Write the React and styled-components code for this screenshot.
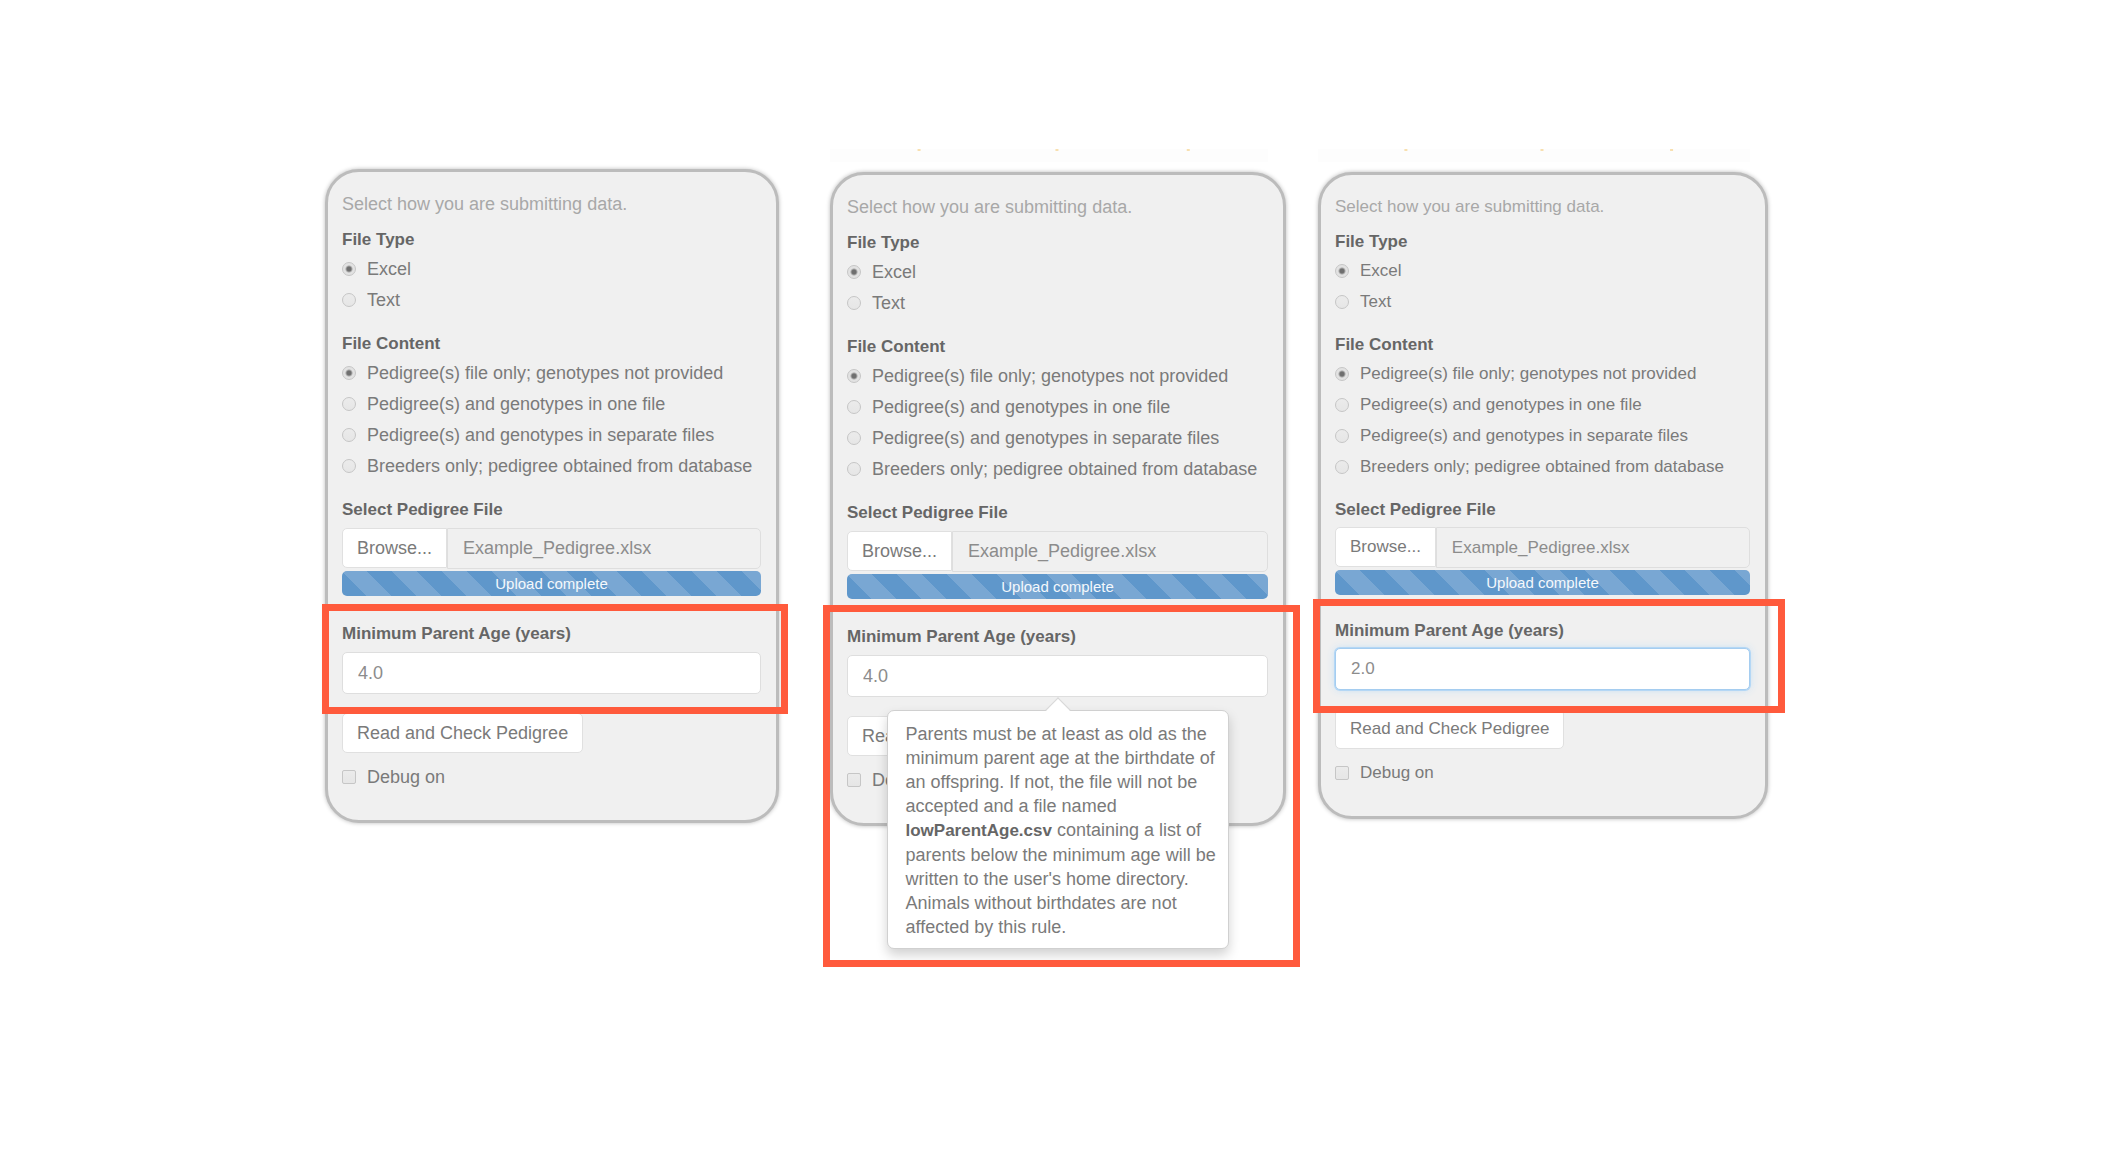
import React, { useId } from "react";
import styled, { createGlobalStyle, css } from "styled-components";

const GlobalStyle = createGlobalStyle`
  *, *::before, *::after { box-sizing: border-box; }
  body {
    margin: 0;
    background: #fff;
    color: #7a7a7a;
    font-family: "Liberation Sans", Arial, sans-serif;
    font-size: 18px;
    line-height: 24px;
  }
  button, input { font: inherit; color: inherit; }
`;

const Board = styled.main`
  display: grid;
  grid-template-columns: 325fr 454fr 51fr 456fr 32fr 450fr 344fr;
  align-items: start;
  padding: 149px 0 170px;
`;

const Column = styled.section`
  grid-column: ${(p) => p.$track};
  min-width: 0;
`;

const Strip = styled.svg`
  display: block;
  width: 96%;
  height: ${(p) => (p.$short ? 10 : 13)}px;
`;

const Panel = styled.form`
  margin-top: 10px;
  padding: 20px 15px 31px 14px;
  border: 3px solid #bcbcbc;
  border-radius: 34px;
  background: #f0f0f0;
  box-shadow: 0 0 4px #bbb;
  font-size: ${(p) => (p.$dense ? 17 : 18)}px;
`;

const Intro = styled.p`
  margin: 0 0 ${(p) => (p.$dense ? 11 : 12)}px;
  color: #a8a8a8;
`;

const heading = css`
  display: block;
  padding: 0;
  color: #666;
  font-size: 17px;
  font-weight: bold;
`;

const Group = styled.fieldset`
  display: grid;
  gap: 7px;
  margin: 0 0 ${(p) => (p.$dense ? 19 : 20)}px;
  padding: 0;
  border: 0;
  min-width: 0;
`;

const Legend = styled.legend`
  ${heading}
  margin-bottom: 5px;
`;

const Choice = styled.label`
  display: flex;
  align-items: center;
  gap: 11px;
  white-space: nowrap;
`;

const Tick = styled.input`
  appearance: none;
  flex: none;
  width: 14px;
  height: 14px;
  margin: 0;
  border: 1px solid #c6c6c6;
  border-radius: ${(p) => (p.type === "radio" ? "50%" : "2px")};
  background: linear-gradient(#ebebeb, #e6e6e6);
  &:checked {
    background: radial-gradient(circle, #6f6f6f 0 2px, #e2e2e2 4px);
  }
`;

const Field = styled.div`
  position: relative;
  margin-bottom: ${(p) => p.$gap}px;
`;

const FieldLabel = styled.label`
  ${heading}
  margin-bottom: ${(p) => (p.$dense ? 5 : 6)}px;
`;

const FileRow = styled.div`
  display: flex;
  align-items: flex-start;
`;

const Button = styled.button`
  height: 40px;
  padding: 0 14px;
  border: 1px solid #e0e0e0;
  border-radius: ${(p) => (p.$joined ? "5px 0 0 5px" : "5px")};
  background: #fff;
  white-space: nowrap;
`;

const Actions = styled.div`
  display: grid;
  justify-items: start;
  gap: 12px;
`;

const TextBox = styled.input`
  display: block;
  flex: 1;
  width: 100%;
  min-width: 0;
  height: ${(p) => (p.$joined ? 41 : 42)}px;
  padding: 0 15px;
  border: 1px solid ${(p) => (p.$active ? "#a5cdf0" : "#dedede")};
  border-radius: ${(p) => (p.$joined ? "0 5px 5px 0" : "5px")};
  background: ${(p) => (p.$joined ? "#f0f0f0" : "#fff")};
  color: #8c8c8c;
  outline: 0;
  ${(p) => p.$active && "box-shadow: 0 0 0 1px #b4d7f5, 0 0 8px #c4dff5;"}
`;

const Progress = styled.div`
  height: 25px;
  margin-top: 2px;
  border-radius: 5px;
  background: #5f97cb
    linear-gradient(45deg, #79a7d3 25%, transparent 25%, transparent 50%, #79a7d3 50%, #79a7d3 75%, transparent 75%)
    0 0 / 50px 50px;
  color: #f4f8fc;
  font-size: 15px;
  line-height: 25px;
  text-align: center;
`;

const Highlight = styled.div`
  position: absolute;
  top: ${(p) => p.$frame.top}px;
  right: ${(p) => p.$frame.right}px;
  left: ${(p) => p.$frame.left}px;
  height: ${(p) => p.$frame.height}px;
  border: 7px solid #ff5a3c;
  pointer-events: none;
  z-index: 3;
`;

const Popover = styled.div`
  position: absolute;
  top: 85px;
  right: 0;
  left: 0;
  z-index: 2;
  width: 342px;
  margin: 0 auto;
  padding: 11px 10px 9px 18px;
  border: 1px solid #d0d0d0;
  border-radius: 7px;
  background: #fff;
  box-shadow: 0 6px 12px rgba(0, 0, 0, 0.18);
  &::before {
    content: "";
    position: absolute;
    top: -10px;
    left: calc(50% - 9px);
    width: 18px;
    height: 18px;
    border: solid #d8d8d8;
    border-width: 1px 0 0 1px;
    background: linear-gradient(135deg, #fff 50%, transparent 50%);
    transform: rotate(45deg);
  }
`;

const Strong = styled.strong`
  color: #666;
  font-size: 17px;
`;

const FILE_TYPES = ["Excel", "Text"];
const FILE_CONTENTS = [
  "Pedigree(s) file only; genotypes not provided",
  "Pedigree(s) and genotypes in one file",
  "Pedigree(s) and genotypes in separate files",
  "Breeders only; pedigree obtained from database",
];

const FRAMES = {
  field: { top: -18, left: -20, right: -27, height: 110 },
  popover: { top: -20, left: -24, right: -32, height: 362 },
  focused: { top: -20, left: -22, right: -35, height: 114 },
};

function RadioGroup({ title, options, dense }) {
  const name = useId();
  return (
    <Group $dense={dense}>
      <Legend>{title}</Legend>
      {options.map((option, i) => (
        <Choice key={option}>
          <Tick type="radio" name={name} defaultChecked={i === 0} />
          {option}
        </Choice>
      ))}
    </Group>
  );
}

function HeaderStrip({ marked }) {
  return (
    <Strip $short={!marked} aria-hidden="true">
      {marked && (
        <>
          <rect width="100%" height="13" fill="#fdfdfd" />
          {["20%", "51.5%", "81.5%"].map((x) => (
            <rect key={x} x={x} width="3" height="2" fill="#f8e0b0" />
          ))}
        </>
      )}
    </Strip>
  );
}

function PedigreeForm({ track, age, frame, marked, dense, active, help }) {
  const id = useId();
  return (
    <Column $track={track}>
      <HeaderStrip marked={marked} />
      <Panel $dense={dense} onSubmit={(e) => e.preventDefault()}>
        <Intro $dense={dense}>Select how you are submitting data.</Intro>
        <RadioGroup title="File Type" options={FILE_TYPES} dense={dense} />
        <RadioGroup title="File Content" options={FILE_CONTENTS} dense={dense} />
        <Field $gap={dense ? 24 : 26}>
          <FieldLabel $dense={dense} htmlFor={`${id}-file`}>Select Pedigree File</FieldLabel>
          <FileRow>
            <Button type="button" $joined>Browse...</Button>
            <TextBox id={`${id}-file`} $joined readOnly value="Example_Pedigree.xlsx" />
          </FileRow>
          <Progress>Upload complete</Progress>
        </Field>
        <Field $gap={19}>
          <FieldLabel $dense={dense} htmlFor={`${id}-age`}>Minimum Parent Age (years)</FieldLabel>
          <TextBox id={`${id}-age`} $active={active} defaultValue={age} />
          {help && (
            <Popover role="tooltip">
              Parents must be at least as old as the minimum parent age at the birthdate of an
              offspring. If not, the file will not be accepted and a file named{" "}
              <Strong>lowParentAge.csv</Strong> containing a list of parents below the minimum age
              will be written to the user's home directory. Animals without birthdates are not
              affected by this rule.
            </Popover>
          )}
          <Highlight $frame={FRAMES[frame]} />
        </Field>
        <Actions>
          <Button type="submit">Read and Check Pedigree</Button>
          <Choice>
            <Tick type="checkbox" />
            Debug on
          </Choice>
        </Actions>
      </Panel>
    </Column>
  );
}

export default function App() {
  return (
    <>
      <GlobalStyle />
      <Board>
        <PedigreeForm track={2} age="4.0" frame="field" />
        <PedigreeForm track={4} age="4.0" frame="popover" marked help />
        <PedigreeForm track={6} age="2.0" frame="focused" marked dense active />
      </Board>
    </>
  );
}
